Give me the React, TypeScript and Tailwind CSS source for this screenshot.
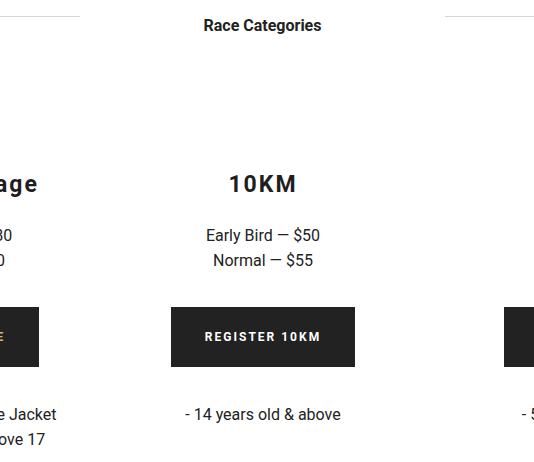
const categories = [
  {
    title: 'Heritage Package',
    prices: ['Early Bird Pack — $180', 'Normal Pack — $140'],
    button: 'Register Heritage',
    accent: true,
    notes: ['- Includes an Exclusive Race Jacket', '- For participants aged above 17'],
  },
  {
    title: '10KM',
    prices: ['Early Bird — $50', 'Normal — $55'],
    button: 'Register 10KM',
    accent: false,
    notes: ['- 14 years old & above'],
  },
  {
    title: '5KM',
    prices: ['Early Bird — $40', 'Normal — $45'],
    button: 'Register 5KM',
    accent: false,
    notes: ['- 5 years old & above'],
  },
]

function CategoryCard({ cat }: { cat: (typeof categories)[number] }) {
  return (
    <div className="w-[332px] shrink-0 flex flex-col items-center text-center">
      <h3 className="text-[23px] leading-[28px] font-bold tracking-[2px] text-[#1e1e1e] whitespace-nowrap">
        {cat.title}
      </h3>
      <div className="mt-[24px] text-[16px] leading-[25px] text-[#222]">
        {cat.prices.map((p) => (
          <div key={p} className="whitespace-nowrap">{p}</div>
        ))}
      </div>
      <button
        className={`mt-[34px] h-[60px] min-w-[183px] px-[34px] bg-[#222] uppercase text-[12px] font-bold tracking-[2px] whitespace-nowrap ${
          cat.accent ? 'text-[#d9b47a]' : 'text-white'
        }`}
      >
        {cat.button}
      </button>
      <div className="mt-[35px] text-[16px] leading-[25px] text-[#222]">
        {cat.notes.map((n) => (
          <div key={n} className="whitespace-nowrap">{n}</div>
        ))}
      </div>
    </div>
  )
}

export default function App() {
  return (
    <div
      className="w-[534px] h-[462px] overflow-hidden bg-white pt-[16px]"
      style={{ fontFamily: 'Roboto, "Noto Sans", sans-serif' }}
    >
      <div className="flex items-start">
        <div className="w-[80px] h-px bg-[#d6d6d6]" />
        <h2 className="flex-1 text-center text-[16px] leading-[20px] font-bold text-[#222]">
          Race Categories
        </h2>
        <div className="w-[89px] h-px bg-[#d6d6d6]" />
      </div>

      <div className="mt-[135px] flex ml-[-235px]">
        {categories.map((cat) => (
          <CategoryCard key={cat.title} cat={cat} />
        ))}
      </div>
    </div>
  )
}
